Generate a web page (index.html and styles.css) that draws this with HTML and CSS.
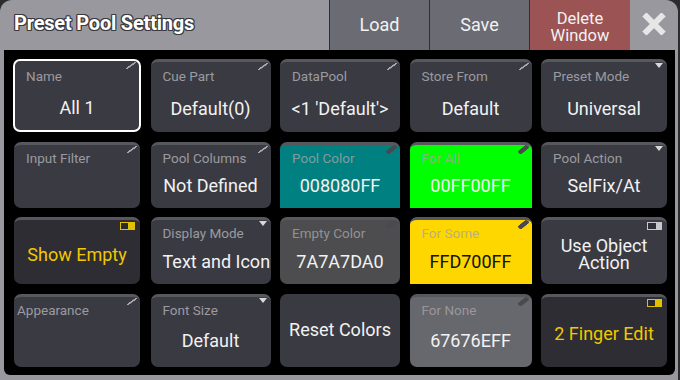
FILE: index.html
```html
<!DOCTYPE html>
<html>
<head>
<meta charset="utf-8">
<link rel="stylesheet" href="styles.css">
</head>
<body>
<div class="window">
  <div class="header">
    <div class="title">Preset Pool Settings</div>
    <div class="hbtn first">Load</div>
    <div class="hbtn">Save</div>
    <div class="hbtn del">Delete<br>Window</div>
    <div class="close">
      <svg width="24" height="22" viewBox="0 0 24 22"><path d="M4.5 3.5 L19.5 18.5 M19.5 3.5 L4.5 18.5" stroke="#e6e6e6" stroke-width="6" stroke-linecap="square"/></svg>
    </div>
  </div>
  <div class="panel">
    <div class="grid">
      <div class="cell name r1"><div class="lbl">Name</div><div class="val">All 1</div><span class="pen"></span></div>
      <div class="cell r1"><div class="lbl">Cue Part</div><div class="val">Default(0)</div><span class="pen"></span></div>
      <div class="cell r1"><div class="lbl">DataPool</div><div class="val">&lt;1 'Default'&gt;</div><span class="pen"></span></div>
      <div class="cell r1"><div class="lbl">Store From</div><div class="val">Default</div><span class="pen"></span></div>
      <div class="cell r1"><div class="lbl">Preset Mode</div><div class="val">Universal</div><span class="tri"></span></div>

      <div class="cell c1"><div class="lbl">Input Filter</div><div class="val"></div><span class="pen"></span></div>
      <div class="cell"><div class="lbl">Pool Columns</div><div class="val">Not Defined</div><span class="pen"></span></div>
      <div class="cell color teal sq"><div class="lbl">Pool Color</div><div class="val">008080FF</div><span class="pen dark"></span></div>
      <div class="cell color green sq"><div class="lbl">For All</div><div class="val">00FF00FF</div><span class="pen dark"></span></div>
      <div class="cell"><div class="lbl">Pool Action</div><div class="val">SelFix/At</div><span class="tri"></span></div>

      <div class="cell c1 dim"><div class="val solo yellow">Show Empty</div><span class="tog on"></span></div>
      <div class="cell"><div class="lbl">Display Mode</div><div class="val left">Text and Icon</div><span class="tri"></span></div>
      <div class="cell color empty"><div class="lbl">Empty Color</div><div class="val">7A7A7DA0</div><span class="pen dark"></span></div>
      <div class="cell color gold sq"><div class="lbl">For Some</div><div class="val black">FFD700FF</div><span class="pen dark"></span></div>
      <div class="cell"><div class="val solo two">Use Object<br>Action</div><span class="tog off"></span></div>

      <div class="cell c1"><div class="lbl app">Appearance</div><div class="val"></div><span class="pen"></span></div>
      <div class="cell"><div class="lbl">Font Size</div><div class="val">Default</div><span class="tri"></span></div>
      <div class="cell noband"><div class="val plain">Reset Colors</div></div>
      <div class="cell color none"><div class="lbl">For None</div><div class="val">67676EFF</div><span class="pen dark"></span></div>
      <div class="cell dim"><div class="val solo yellow">2 Finger Edit</div><span class="tog on"></span></div>
    </div>
  </div>
</div>
</body>
</html>
```

FILE: styles.css
```css
html, body {
  margin: 0;
  padding: 0;
  background: #2c2c30;
  font-family: Roboto, "Liberation Sans", sans-serif;
}

.window {
  width: 678px;
  height: 380px;
  background: #98989e;
  border-radius: 12px 12px 0 0;
  display: flex;
  flex-direction: column;
  overflow: hidden;
}

.header {
  height: 50px;
  display: flex;
  flex: none;
}

.title {
  flex: 1;
  padding-left: 14px;
  display: flex;
  align-items: center;
  padding-bottom: 4px;
  font-size: 20px;
  font-weight: bold;
  letter-spacing: -0.2px;
  color: #ffffff;
  text-shadow: -1px -1px 0 #3a3a3e, 1px -1px 0 #3a3a3e, -1px 1px 0 #3a3a3e, 1px 1px 0 #3a3a3e, 0 1px 0 #3a3a3e, 0 -1px 0 #3a3a3e, 1px 0 0 #3a3a3e, -1px 0 0 #3a3a3e;
}

.hbtn {
  background: #6b6b73;
  border-right: 1px solid #2e2e34;
  display: flex;
  align-items: center;
  justify-content: center;
  color: #f2f2f2;
  font-size: 18px;
  text-align: center;
  padding-bottom: 2px;
  box-sizing: border-box;
  width: 100px;
}

.hbtn.first {
  border-left: 1px solid #2e2e34;
  width: 101px;
}

.hbtn.del {
  background: #9b5353;
  font-size: 16.5px;
  line-height: 17px;
  border-right: none;
  padding-top: 3px;
  padding-bottom: 0;
}

.close {
  flex: none;
  width: 48px;
  display: flex;
  align-items: center;
  justify-content: center;
  padding-bottom: 2px;
}

.panel {
  flex: 1;
  margin: 0 3px 5px 4px;
  background: #000;
  border-radius: 0 0 6px 6px;
  padding: 9px 0 0 9px;
}

.grid {
  display: grid;
  grid-template-columns: 128px 120px 120px 122px 126px;
  grid-template-rows: 73px 66px 67px 73px;
  column-gap: 9.5px;
  row-gap: 9.5px;
}

.cell {
  position: relative;
  background: #3a3a42;
  border-top: 3px solid #57575e;
  border-radius: 7px;
  display: flex;
  flex-direction: column;
  overflow: hidden;
  min-width: 0;
}

.cell.c1 {
  margin: 0 1px;
}

.cell.name {
  border: 2px solid #ffffff;
}

.cell.noband {
  border-top: none;
}

.cell.dim {
  background: #2d2d33;
}

.lbl {
  font-size: 13.5px;
  line-height: 17px;
  color: #9a9aa0;
  padding: 5px 0 0 12px;
  white-space: nowrap;
}

.r1 .lbl {
  padding-top: 6px;
}

.name .lbl {
  padding: 7px 0 0 11px;
}

.lbl.app {
  padding-left: 3px;
}

.val {
  flex: 1;
  display: flex;
  align-items: center;
  justify-content: center;
  padding-bottom: 4px;
  font-size: 18px;
  color: #f2f2f2;
  white-space: nowrap;
}

.r1 .val {
  padding-bottom: 1px;
}

.val.left {
  justify-content: flex-start;
  padding-left: 12px;
}

.val.solo {
  padding-top: 4px;
  padding-bottom: 0;
  text-align: center;
}

.val.two {
  line-height: 17px;
}

.val.plain {
  padding-bottom: 2px;
}

.val.yellow {
  color: #f0c800;
}

.val.black {
  color: #111;
}

.color .lbl {
  color: rgba(165, 165, 165, 0.8);
}

.teal { background: #008080; }
.green { background: #00ff00; }
.gold { background: #ffd700; }
.empty { background: #4d4d4f; }
.none { background: #67676e; }

.cell.sq {
  border-radius: 7px 7px 0 0;
}

.pen {
  position: absolute;
  top: 1px;
  right: 3px;
  width: 10px;
  height: 7px;
  background: linear-gradient(to bottom right, transparent 42%, #a8a8ac 44%, #a8a8ac 56%, transparent 58%);
}

.pen.dark {
  top: 0;
  right: 3px;
  width: 11px;
  height: 9px;
  background: linear-gradient(to bottom right, transparent 32%, #4a4a4e 36%, #4a4a4e 64%, transparent 68%);
  border-radius: 3px;
}

.tri {
  position: absolute;
  top: 1px;
  right: 4px;
  width: 0;
  height: 0;
  border-left: 4px solid transparent;
  border-right: 4px solid transparent;
  border-top: 5px solid #d8d8dc;
}

.tog {
  position: absolute;
  top: 2px;
  right: 5px;
  width: 15px;
  height: 8px;
  box-sizing: border-box;
}

.tog::before {
  content: "";
  position: absolute;
  left: 1px;
  top: 1px;
  width: 7px;
  height: 6px;
  background: #2a2a2e;
}

.tog.on {
  background: #e0c000;
}

.tog.off {
  background: #c8c8cc;
}

.tog.off::before {
  width: 8px;
  background: #303036;
}
```
